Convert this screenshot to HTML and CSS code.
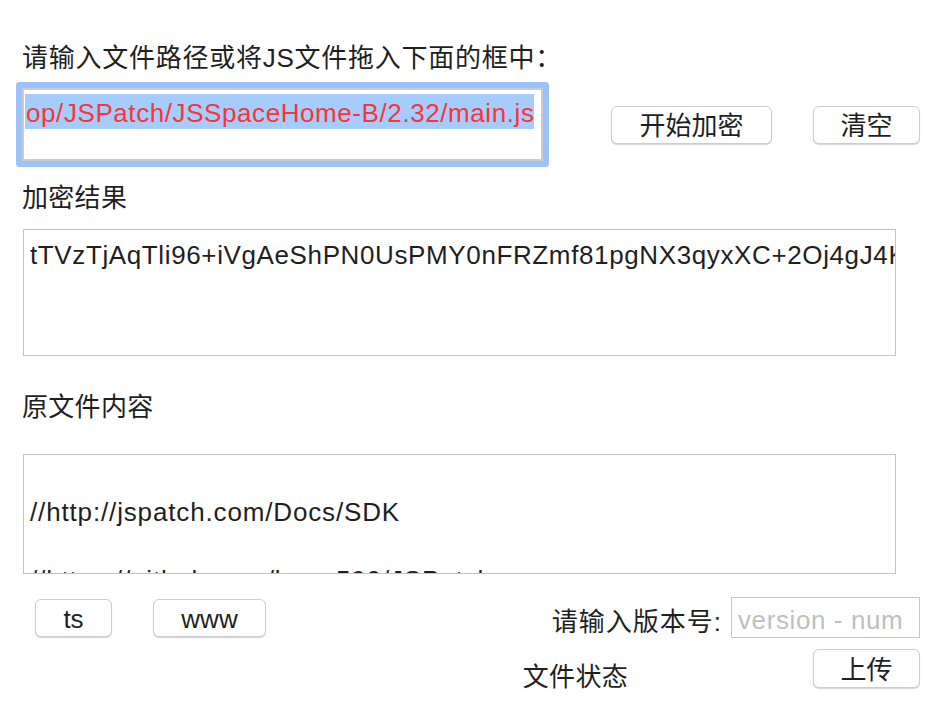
FILE: index.html
```html
<!DOCTYPE html>
<html lang="zh-CN">
<head>
<meta charset="utf-8">
<title>JSPatch 加密</title>
<link rel="stylesheet" href="styles.css">
</head>
<body>
<div class="app">
  <div class="label first">请输入文件路径或将JS文件拖入下面的框中：</div>
  <div class="top-row">
    <div class="path-field"><span class="selected">op/JSPatch/JSSpaceHome-B/2.32/main.js</span></div>
    <div class="top-buttons">
      <button class="btn btn-encrypt">开始加密</button>
      <button class="btn btn-clear">清空</button>
    </div>
  </div>
  <div class="label result-label">加密结果</div>
  <div class="box box-result"><div class="line">tTVzTjAqTli96+iVgAeShPN0UsPMY0nFRZmf81pgNX3qyxXC+2Oj4gJ4K</div></div>
  <div class="label source-label">原文件内容</div>
  <div class="box box-source">
    <div class="line">&nbsp;</div>
    <div class="line">//http://jspatch.com/Docs/SDK</div>
    <div class="line">&nbsp;</div>
    <div class="line">//https://github.com/bang590/JSPatch</div>
  </div>
  <div class="bottom">
    <div class="bottom-row">
      <button class="btn btn-ts">ts</button>
      <button class="btn btn-www">www</button>
      <div class="spacer"></div>
      <span class="version-label">请输入版本号:</span>
      <div class="version-field"><span class="placeholder">version - num</span></div>
    </div>
    <div class="status-row">
      <span class="status">文件状态</span>
      <button class="btn btn-upload">上传</button>
    </div>
  </div>
</div>
</body>
</html>
```

FILE: styles.css
```css
html, body {
  margin: 0;
  padding: 0;
  background: #ffffff;
}

.app {
  width: 948px;
  height: 710px;
  box-sizing: border-box;
  padding: 41px 28px 0 22px;
  font-family: "Liberation Sans", "Noto Sans CJK SC", sans-serif;
  font-size: 26px;
  color: #1f1f1f;
  overflow: hidden;
}

.label {
  height: 34px;
  line-height: 34px;
  white-space: nowrap;
  letter-spacing: 0.3px;
}

.label.first {
  letter-spacing: 0.75px;
}

.top-row {
  display: flex;
  align-items: flex-start;
  margin-top: 13px;
}

.path-field {
  width: 521px;
  height: 73px;
  box-sizing: border-box;
  border: 2px solid #cbcbcb;
  border-radius: 1px;
  box-shadow: 0 0 0 6px #9dc2fa;
  padding: 4px 0 0 1px;
  overflow: hidden;
  white-space: nowrap;
  line-height: 33px;
}

.selected {
  display: inline-block;
  background: #a6ccfd;
  color: #fb3434;
  padding-top: 2px;
  height: 33px;
  line-height: 35px;
  letter-spacing: 0.58px;
  padding-left: 1px;
}

.top-buttons {
  display: flex;
  gap: 41px;
  margin-left: 68px;
  margin-top: 18px;
}

.btn {
  font-family: "Liberation Sans", "Noto Sans CJK SC", sans-serif;
  font-size: 26px;
  color: #1f1f1f;
  background: #ffffff;
  border: 1px solid #cdcdcd;
  border-radius: 6px;
  box-shadow: 0 1px 1px rgba(0, 0, 0, 0.18);
  height: 38px;
  padding: 2px 0 0;
  line-height: 34px;
  box-sizing: border-box;
}

.btn-encrypt { width: 161px; }
.btn-clear { width: 107px; }

.result-label { margin-top: 20px; }

.box {
  margin-left: 1px;
  width: 873px;
  box-sizing: border-box;
  border: 1px solid #c4c4c4;
  background: #ffffff;
  overflow: hidden;
  padding: 6px 0 0 6px;
}

.box .line {
  white-space: nowrap;
  height: 34px;
  line-height: 34px;
}

.box-result {
  margin-top: 14px;
  height: 127px;
  padding-top: 8px;
}

.box-result .line {
  letter-spacing: 0.62px;
}

.source-label { margin-top: 34px; }

.box-source {
  margin-top: 30px;
  height: 120px;
}

.box-source .line {
  letter-spacing: 0.85px;
}

.bottom {
  margin-top: 23px;
}

.bottom-row {
  display: flex;
  align-items: center;
  height: 41px;
}

.btn-ts {
  width: 77px;
  margin-left: 13px;
}

.btn-www {
  width: 113px;
  margin-left: 41px;
}

.spacer { flex: 1; }

.version-label {
  margin-right: 9px;
  white-space: nowrap;
  letter-spacing: 1px;
  padding-top: 3px;
}

.version-field {
  width: 189px;
  height: 41px;
  box-sizing: border-box;
  border: 1px solid #c6c6c6;
  padding: 3px 0 0 6px;
  line-height: 38px;
  white-space: nowrap;
  overflow: hidden;
}

.placeholder {
  color: #bfbfbf;
  letter-spacing: 0.6px;
}

.status-row {
  display: flex;
  align-items: flex-start;
  justify-content: flex-end;
  margin-top: 11px;
}

.status {
  margin-top: 11px;
  line-height: 34px;
  margin-right: 185px;
  letter-spacing: 0.3px;
}

.btn-upload {
  width: 107px;
  height: 39px;
}
```
